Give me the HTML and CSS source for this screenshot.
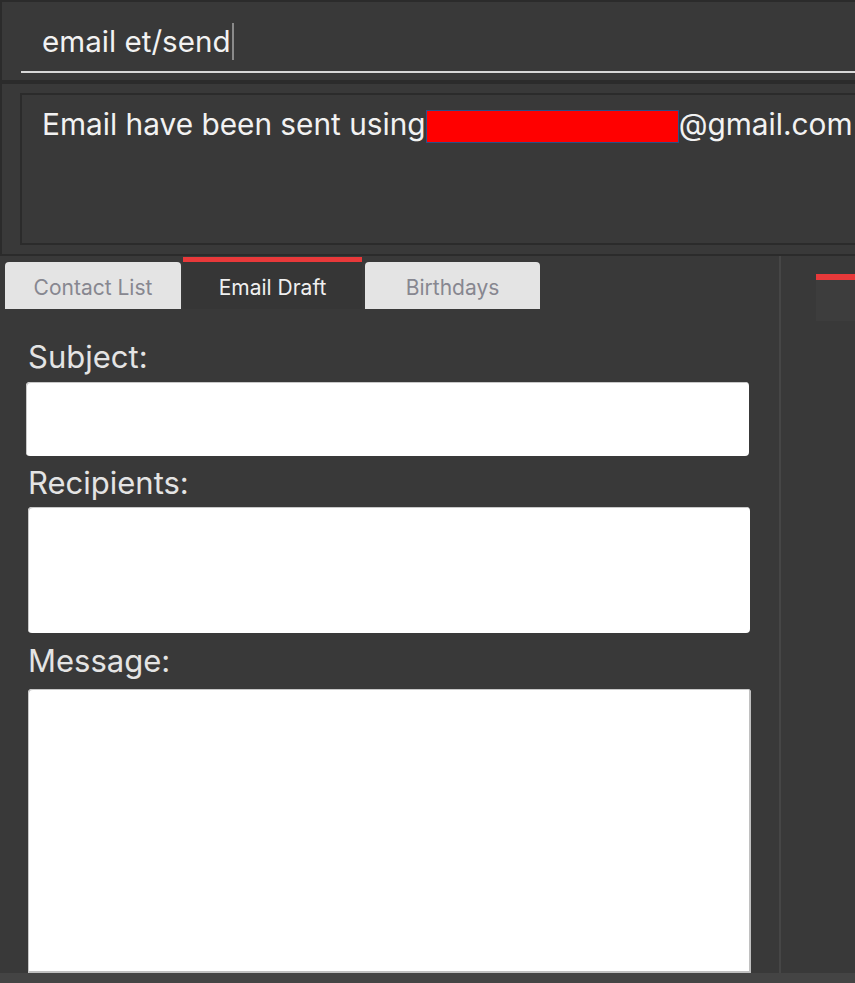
FILE: index.html
```html
<!DOCTYPE html>
<html lang="en">
<head>
<meta charset="utf-8">
<title>Email Draft</title>
<link rel="stylesheet" href="styles.css">
</head>
<body>
<div class="app">
  <div class="cmd-panel">
    <div class="cmd-input"><span class="cmd-text">email et/send</span><span class="caret"></span></div>
  </div>
  <div class="sep"></div>
  <div class="result-panel">
    <div class="result-box">
      <p class="result-text">Email have been sent using<span class="redact"></span>@gmail.com</p>
    </div>
  </div>
  <div class="main">
    <div class="left-pane">
      <div class="tabs">
        <div class="tab">Contact List</div>
        <div class="tab active">Email Draft</div>
        <div class="tab">Birthdays</div>
      </div>
      <div class="form">
        <label class="label label-subject">Subject:</label>
        <div class="field subject"></div>
        <label class="label label-recipients">Recipients:</label>
        <div class="field recipients"></div>
        <label class="label label-message">Message:</label>
        <div class="field message"></div>
      </div>
    </div>
    <div class="divider"></div>
    <div class="right-pane">
      <div class="right-tab"></div>
    </div>
  </div>
  <div class="bottom-bar"></div>
</div>
</body>
</html>
```
FILE: styles.css
```css
html, body {
  margin: 0;
  padding: 0;
}
body {
  background: #393939;
  width: 855px;
  height: 983px;
  overflow: hidden;
  font-family: Inter, "Open Sans", "Liberation Sans", sans-serif;
  color: #f2f2f2;
}
.app {
  display: flex;
  flex-direction: column;
  height: 983px;
}
.cmd-panel {
  border-top: 2px solid #2b2b2b;
  border-left: 2px solid #2b2b2b;
  padding-left: 19px;
  box-sizing: border-box;
  height: 80px;
}
.cmd-input {
  border-bottom: 2px solid #d8d8d8;
  box-sizing: border-box;
  height: 71px;
  display: flex;
  align-items: flex-start;
  padding-left: 21px;
  padding-top: 21px;
}
.cmd-text {
  font-size: 29.6px;
  line-height: 36px;
}
.caret {
  display: block;
  width: 2px;
  height: 37px;
  background: #8a8a8a;
  margin-left: 1px;
}
.sep {
  height: 4px;
  background: #2b2b2b;
}
.result-panel {
  border-left: 2px solid #2b2b2b;
  border-bottom: 2px solid #2b2b2b;
  padding: 9px 0 9px 18px;
}
.result-box {
  height: 148px;
  border: 2px solid #2b2b2b;
  border-right: none;
  padding-left: 20px;
}
.result-text {
  margin: 0;
  padding-top: 11px;
  font-size: 29.8px;
  line-height: 36px;
  white-space: nowrap;
  display: flex;
  align-items: flex-start;
}
.redact {
  display: block;
  width: 251px;
  height: 31px;
  background: #ff0000;
  border: 1px solid #2c4f86;
  margin: 4px 0 0 0;
}
.main {
  flex: 1;
  display: flex;
  min-height: 0;
}
.left-pane {
  width: 779px;
  display: flex;
  flex-direction: column;
}
.tabs {
  display: flex;
  align-items: flex-end;
  padding-left: 5px;
  height: 53px;
  box-sizing: border-box;
  gap: 2px;
}
.tab {
  width: 176px;
  height: 47px;
  background: #e4e4e4;
  border-radius: 4px 4px 0 0;
  color: #878790;
  font-size: 21px;
  display: flex;
  align-items: center;
  justify-content: center;
  box-sizing: border-box;
  padding-top: 4px;
}
.tab:last-child {
  margin-left: 1px;
  width: 175px;
}
.tab.active {
  width: 179px;
  height: 52px;
  background: #363636;
  color: #f0f0f0;
  border-top: 5px solid #e8393a;
  border-radius: 0;
}
.form {
  display: flex;
  flex-direction: column;
  padding-left: 26px;
  flex: 1;
}
.label {
  font-size: 31px;
  line-height: 38px;
  color: #e4e4e4;
  padding-left: 2px;
  display: block;
  box-sizing: border-box;
}
.label-subject {
  height: 73px;
  padding-top: 29px;
}
.label-recipients {
  height: 51px;
  padding-top: 8px;
}
.label-message {
  height: 56px;
  padding-top: 9px;
}
.field {
  background: #ffffff;
  border-radius: 4px;
  box-shadow: inset 1px 1px 0 #c8c8c8;
  box-sizing: border-box;
}
.subject {
  width: 723px;
  height: 74px;
}
.recipients {
  margin-left: 2px;
  width: 722px;
  height: 126px;
}
.message {
  margin-left: 2px;
  width: 723px;
  flex: 1;
  border-radius: 4px 4px 0 0;
  box-shadow: inset 1px 1px 0 #c8c8c8, inset -2px -2px 0 #c0c0c0;
}
.divider {
  width: 2px;
  background: #464646;
}
.right-pane {
  flex: 1;
  padding: 18px 0 0 34px;
}
.right-tab {
  height: 47px;
  border-top: 6px solid #e8393a;
  background: #3d3d3d;
  box-sizing: border-box;
  margin-left: 1px;
}
.bottom-bar {
  height: 10px;
  background: #444444;
}
```
